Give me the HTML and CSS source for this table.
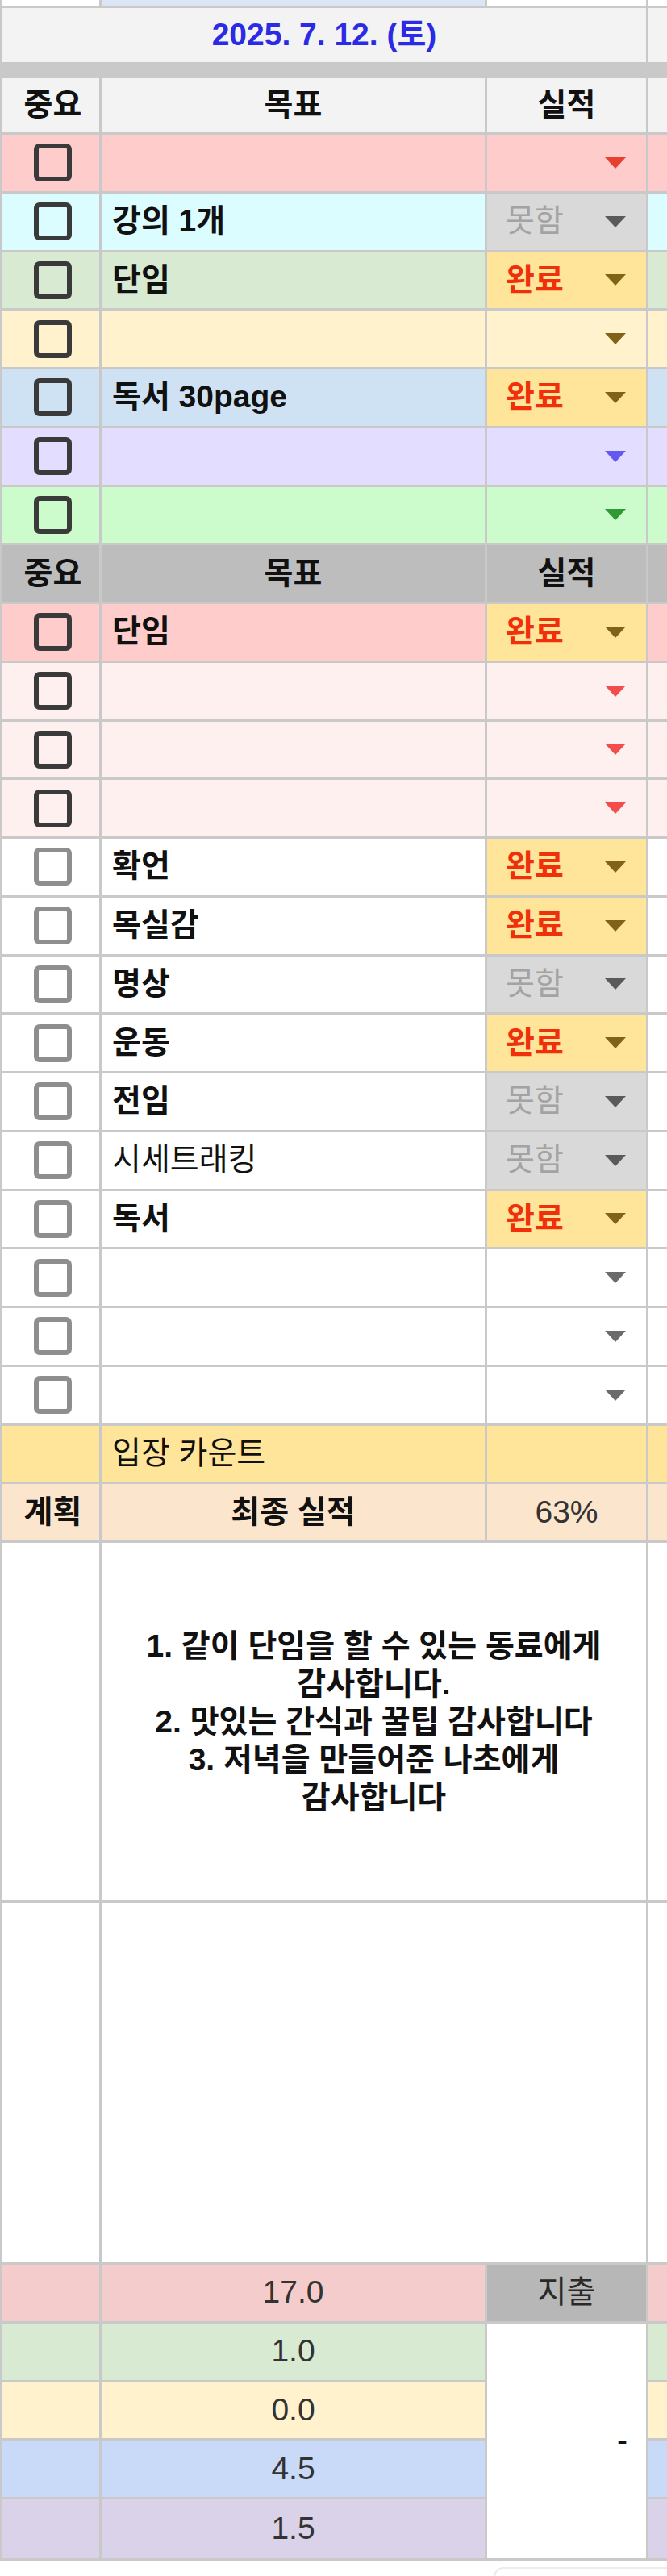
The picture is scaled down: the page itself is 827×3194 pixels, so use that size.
FILE: index.html
```html
<!DOCTYPE html>
<html lang="ko">
<head>
    <meta charset="UTF-8">
    <meta name="viewport" content="width=device-width, initial-scale=1.0">
    <title>2025. 7. 12. (토)</title>
    <link rel="stylesheet" href="styles.css">
</head>
<body>
    <div class="sheet">
        <!-- bottom of the previous day -->
        <div class="row strip">
            <div class="cell"></div>
            <div class="cell prev"></div>
            <div class="cell"></div>
            <div class="cell"></div>
        </div>

        <div class="row light">
            <div class="cell date">2025. 7. 12. (토)</div>
            <div class="cell"></div>
        </div>

        <div class="sep"></div>

        <div class="row light head">
            <div class="cell chk">중요</div>
            <div class="cell mid">목표</div>
            <div class="cell mid">실적</div>
            <div class="cell"></div>
        </div>

        <!-- priority block -->
        <div class="row pink">
            <div class="cell chk"><span class="box"></span></div>
            <div class="cell goal"></div>
            <div class="cell res"><span class="caret"></span></div>
            <div class="cell"></div>
        </div>
        <div class="row cyan">
            <div class="cell chk"><span class="box"></span></div>
            <div class="cell goal">강의 1개</div>
            <div class="cell res fail"><span class="val">못함</span><span class="caret"></span></div>
            <div class="cell"></div>
        </div>
        <div class="row green">
            <div class="cell chk"><span class="box"></span></div>
            <div class="cell goal">단임</div>
            <div class="cell res done"><span class="val">완료</span><span class="caret"></span></div>
            <div class="cell"></div>
        </div>
        <div class="row yellow">
            <div class="cell chk"><span class="box"></span></div>
            <div class="cell goal"></div>
            <div class="cell res"><span class="caret"></span></div>
            <div class="cell"></div>
        </div>
        <div class="row blue">
            <div class="cell chk"><span class="box"></span></div>
            <div class="cell goal">독서 30page</div>
            <div class="cell res done"><span class="val">완료</span><span class="caret"></span></div>
            <div class="cell"></div>
        </div>
        <div class="row purple">
            <div class="cell chk"><span class="box"></span></div>
            <div class="cell goal"></div>
            <div class="cell res"><span class="caret"></span></div>
            <div class="cell"></div>
        </div>
        <div class="row lime">
            <div class="cell chk"><span class="box"></span></div>
            <div class="cell goal"></div>
            <div class="cell res"><span class="caret"></span></div>
            <div class="cell"></div>
        </div>

        <div class="row dark head">
            <div class="cell chk">중요</div>
            <div class="cell mid">목표</div>
            <div class="cell mid">실적</div>
            <div class="cell"></div>
        </div>

        <!-- daily routine -->
        <div class="row pink">
            <div class="cell chk"><span class="box"></span></div>
            <div class="cell goal">단임</div>
            <div class="cell res done"><span class="val">완료</span><span class="caret"></span></div>
            <div class="cell"></div>
        </div>
        <div class="row blush">
            <div class="cell chk"><span class="box"></span></div>
            <div class="cell goal"></div>
            <div class="cell res"><span class="caret"></span></div>
            <div class="cell"></div>
        </div>
        <div class="row blush">
            <div class="cell chk"><span class="box"></span></div>
            <div class="cell goal"></div>
            <div class="cell res"><span class="caret"></span></div>
            <div class="cell"></div>
        </div>
        <div class="row blush">
            <div class="cell chk"><span class="box"></span></div>
            <div class="cell goal"></div>
            <div class="cell res"><span class="caret"></span></div>
            <div class="cell"></div>
        </div>
        <div class="row plain">
            <div class="cell chk"><span class="box"></span></div>
            <div class="cell goal">확언</div>
            <div class="cell res done"><span class="val">완료</span><span class="caret"></span></div>
            <div class="cell"></div>
        </div>
        <div class="row plain">
            <div class="cell chk"><span class="box"></span></div>
            <div class="cell goal">목실감</div>
            <div class="cell res done"><span class="val">완료</span><span class="caret"></span></div>
            <div class="cell"></div>
        </div>
        <div class="row plain">
            <div class="cell chk"><span class="box"></span></div>
            <div class="cell goal">명상</div>
            <div class="cell res fail"><span class="val">못함</span><span class="caret"></span></div>
            <div class="cell"></div>
        </div>
        <div class="row plain">
            <div class="cell chk"><span class="box"></span></div>
            <div class="cell goal">운동</div>
            <div class="cell res done"><span class="val">완료</span><span class="caret"></span></div>
            <div class="cell"></div>
        </div>
        <div class="row plain">
            <div class="cell chk"><span class="box"></span></div>
            <div class="cell goal">전임</div>
            <div class="cell res fail"><span class="val">못함</span><span class="caret"></span></div>
            <div class="cell"></div>
        </div>
        <div class="row plain">
            <div class="cell chk"><span class="box"></span></div>
            <div class="cell goal thin">시세트래킹</div>
            <div class="cell res fail"><span class="val">못함</span><span class="caret"></span></div>
            <div class="cell"></div>
        </div>
        <div class="row plain">
            <div class="cell chk"><span class="box"></span></div>
            <div class="cell goal">독서</div>
            <div class="cell res done"><span class="val">완료</span><span class="caret"></span></div>
            <div class="cell"></div>
        </div>
        <div class="row plain">
            <div class="cell chk"><span class="box"></span></div>
            <div class="cell goal"></div>
            <div class="cell res"><span class="caret"></span></div>
            <div class="cell"></div>
        </div>
        <div class="row plain">
            <div class="cell chk"><span class="box"></span></div>
            <div class="cell goal"></div>
            <div class="cell res"><span class="caret"></span></div>
            <div class="cell"></div>
        </div>
        <div class="row plain">
            <div class="cell chk"><span class="box"></span></div>
            <div class="cell goal"></div>
            <div class="cell res"><span class="caret"></span></div>
            <div class="cell"></div>
        </div>

        <div class="row gold">
            <div class="cell"></div>
            <div class="cell goal thin">입장 카운트</div>
            <div class="cell"></div>
            <div class="cell"></div>
        </div>
        <div class="row peach">
            <div class="cell chk bold">계획</div>
            <div class="cell mid bold">최종 실적</div>
            <div class="cell mid num">63%</div>
            <div class="cell"></div>
        </div>

        <!-- gratitude -->
        <div class="row plain">
            <div class="cell"></div>
            <div class="cell note">1. 같이 단임을 할 수 있는 동료에게<br>감사합니다.<br>2. 맛있는 간식과 꿀팁 감사합니다<br>3. 저녁을 만들어준 나초에게<br>감사합니다</div>
            <div class="cell"></div>
        </div>
        <div class="row plain">
            <div class="cell"></div>
            <div class="cell wide"></div>
            <div class="cell"></div>
        </div>

        <!-- time log -->
        <div class="row rose">
            <div class="cell"></div>
            <div class="cell mid num">17.0</div>
            <div class="cell mid spend">지출</div>
            <div class="cell"></div>
        </div>
        <div class="row sage">
            <div class="cell"></div>
            <div class="cell mid num">1.0</div>
            <div class="cell amount">-</div>
            <div class="cell"></div>
        </div>
        <div class="row yellow">
            <div class="cell"></div>
            <div class="cell mid num">0.0</div>
            <div class="cell"></div>
        </div>
        <div class="row sky">
            <div class="cell"></div>
            <div class="cell mid num">4.5</div>
            <div class="cell"></div>
        </div>
        <div class="row lilac">
            <div class="cell"></div>
            <div class="cell mid num">1.5</div>
            <div class="cell"></div>
        </div>
    </div>
    <div class="tab"></div>
</body>
</html>
```

FILE: styles.css
```css
/* sheet grid: the gaps are the grid lines */
body {
    margin: 0;
    background: #fff;
    font-family: "Liberation Sans", "Noto Sans CJK KR", sans-serif;
    font-size: 39px;
    color: #111;
}

.sheet {
    display: grid;
    grid-template-columns: 120px 475px 197px 1fr;
    grid-template-rows: 7px 67px 14px 67px repeat(24, 69.75px) 443px 446px repeat(4, 69.75px) 73px;
    gap: 3px;
    padding: 0 0 3px 3px;
    background: #c9c9c9;
    overflow: hidden;
}

.row {
    display: contents;
    --bg: #fff;
    --caret: #6b6b6b;
    --box: #3a3a3a;
}

.cell {
    background: var(--bg);
    display: flex;
    align-items: center;
    min-width: 0;
    line-height: 1.2;
    white-space: nowrap;
}

.sep {
    grid-column: 1 / -1;
}

/* row colours */
.light  { --bg: #f3f3f3; }
.dark   { --bg: #bdbdbd; }
.pink   { --bg: #ffcccc; --caret: #e8402e; }
.cyan   { --bg: #dcfdff; }
.green  { --bg: #d9ead3; }
.yellow { --bg: #fff2cc; --caret: #806316; }
.blue   { --bg: #cfe2f3; }
.purple { --bg: #e3ddff; --caret: #6457f2; }
.lime   { --bg: #ccfccc; --caret: #2f9a35; }
.blush  { --bg: #fff0f0; --caret: #f24c4c; }
.plain  { --box: #8e8e8e; }
.gold   { --bg: #ffe599; }
.peach  { --bg: #fce5cd; }
.rose   { --bg: #f4cccc; }
.sage   { --bg: #d9ead3; }
.sky    { --bg: #c9daf8; }
.lilac  { --bg: #d9d2e9; }

.strip .prev {
    background: #dbe5f5;
}

.date {
    grid-column: 1 / 4;
    justify-content: center;
    font-weight: bold;
    color: #2b2be6;
}

.head .cell {
    font-weight: bold;
}

.chk {
    justify-content: center;
    padding-left: 5px;
}

.mid {
    justify-content: center;
}

.bold {
    font-weight: bold;
}

.num {
    color: #333;
}

.box {
    width: 47px;
    height: 47px;
    box-sizing: border-box;
    border: 6px solid var(--box);
    border-radius: 7px;
}

.goal {
    padding-left: 13px;
    font-weight: bold;
}

.goal.thin {
    font-weight: normal;
}

/* result dropdown */
.res {
    justify-content: space-between;
    padding: 0 25px 0 23px;
}

.res .caret {
    margin-left: auto;
    width: 0;
    height: 0;
    border-left: 13px solid transparent;
    border-right: 13px solid transparent;
    border-top: 14px solid var(--caret);
}

.res.done {
    background: #ffe599;
    --caret: #806316;
}

.res.done .val {
    color: #f0300a;
    font-weight: bold;
}

.res.fail {
    background: #d9d9d9;
    --caret: #5a5a5a;
}

.res.fail .val {
    color: #a3a3a3;
}

/* merged cells */
.note,
.wide {
    grid-column: 2 / 4;
}

.note {
    justify-content: center;
    text-align: center;
    font-weight: bold;
    line-height: 47px;
}

.spend {
    background: #b7b7b7;
    color: #2a2a2a;
}

.amount {
    grid-row: span 4;
    background: #fff;
    justify-content: flex-end;
    padding-right: 23px;
}

.tab {
    margin: 8px 0 0 612px;
    height: 12px;
    border: 2px solid #ececec;
    border-bottom: none;
    border-right: none;
    border-radius: 12px 0 0 0;
}
```
